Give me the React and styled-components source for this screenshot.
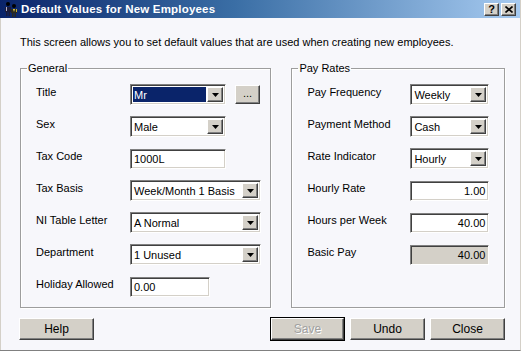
import React from "react";
import styled, { createGlobalStyle, css } from "styled-components";

const GlobalStyle = createGlobalStyle`
  html, body {
    margin: 0;
    padding: 0;
    background: #ffffff;
  }
  * {
    box-sizing: border-box;
  }
`;

const raised = css`
  background: #d4d0c8;
  border: 1px solid;
  border-color: #ffffff #404040 #404040 #ffffff;
  box-shadow: inset -1px -1px #808080;
`;

const sunken = css`
  border: 1px solid;
  border-color: #808080 #ffffff #ffffff #808080;
  box-shadow: inset 1px 1px #404040, inset -1px -1px #d4d0c8;
`;

const Window = styled.div`
  width: 521px;
  height: 351px;
  display: flex;
  flex-direction: column;
  background: #f7f7fb;
  border-right: 1px solid #d4d0c8;
  border-bottom: 1px solid #808080;
  font-family: "Liberation Sans", Arial, sans-serif;
  font-size: 11px;
  color: #000;
`;

const TitleBar = styled.div`
  height: 18px;
  display: flex;
  align-items: center;
  padding: 0 4px 0 3px;
  background: linear-gradient(to right, #0a246a 0%, #3a6ea5 45%, #a6caf0 100%);
  color: #fff;
  font-weight: bold;
  font-size: 11.5px;
`;

const TitleText = styled.span`
  margin-left: 2px;
  flex: 1;
  letter-spacing: 0.2px;
`;

const CaptionButton = styled.button`
  ${raised};
  width: 15px;
  height: 13px;
  padding: 0;
  margin-left: 2px;
  display: flex;
  align-items: center;
  justify-content: center;
  font-family: "Liberation Sans", Arial, sans-serif;
  font-weight: bold;
  font-size: 11px;
  line-height: 1;
  color: #000;
`;

const Body = styled.div`
  flex: 1;
  display: flex;
  flex-direction: column;
  padding: 18px 15px 0 19px;
  border-left: 1px solid #d4d0c8;
`;

const Intro = styled.p`
  margin: 0 0 13px 0;
  line-height: 13px;
  white-space: nowrap;
`;

const Groups = styled.div`
  display: flex;
  gap: 20px;
`;

const GroupBox = styled.fieldset`
  margin: 0;
  width: ${(p) => p.$width}px;
  padding: 9px 0 10px 15px;
  border: 1px solid #9d9d9d;
  box-shadow: 1px 1px 0 #ffffff, inset 1px 1px 0 #ffffff;
  display: grid;
  grid-template-columns: ${(p) => p.$labelWidth}px 1fr;
  grid-auto-rows: 21px;
  row-gap: 11px;
  align-content: start;
`;

const Legend = styled.legend`
  margin-left: -9px;
  padding: 0 1px;
  line-height: 13px;
`;

const Label = styled.span`
  align-self: start;
  padding-top: 2px;
  line-height: 13px;
  white-space: nowrap;
`;

const Cell = styled.div`
  display: flex;
  align-items: center;
  gap: 9px;
`;

const ComboBox = styled.div`
  ${sunken};
  width: ${(p) => p.$width}px;
  height: 21px;
  display: flex;
  align-items: stretch;
  background: #fff;
  padding: 2px;
`;

const ComboValue = styled.span`
  flex: 1;
  display: flex;
  align-items: center;
  padding-left: 1px;
  background: ${(p) => (p.$selected ? "#0a246a" : "transparent")};
  color: ${(p) => (p.$selected ? "#fff" : "#000")};
  white-space: nowrap;
  overflow: hidden;
  margin-right: 1px;
`;

const DropButton = styled.span`
  ${raised};
  width: 16px;
  display: flex;
  align-items: center;
  justify-content: center;
`;

const TextField = styled.div`
  ${sunken};
  width: ${(p) => p.$width}px;
  height: 20px;
  display: flex;
  align-items: center;
  justify-content: ${(p) => (p.$right ? "flex-end" : "flex-start")};
  padding: 0 3px;
  background: ${(p) => (p.$disabled ? "#d4d0c8" : "#fff")};
  white-space: nowrap;
`;

const SmallButton = styled.button`
  ${raised};
  width: 25px;
  height: 19px;
  padding: 0 0 4px 0;
  font-family: "Liberation Sans", Arial, sans-serif;
  font-size: 11px;
  color: #000;
`;

const ButtonRow = styled.div`
  display: flex;
  justify-content: space-between;
  margin-top: 10px;
  margin-left: -1px;
`;

const ButtonGroup = styled.div`
  display: flex;
  gap: 5px;
`;

const PushButton = styled.button`
  ${raised};
  width: ${(p) => (p.$default ? 73 : 75)}px;
  height: 22px;
  padding: 0;
  font-family: "Liberation Sans", Arial, sans-serif;
  font-size: 12px;
  font-weight: normal;
  color: ${(p) => (p.disabled ? "#a0a0a0" : "#000")};
  ${(p) =>
    p.$default &&
    css`
      outline: 1px solid #000;
      outline-offset: 0;
      margin-right: 1px;
      text-shadow: ${p.disabled ? "1px 1px #ffffff" : "none"};
    `}
`;

function Arrow() {
  return (
    <svg width="7" height="4" viewBox="0 0 7 4">
      <path d="M0 0h7L3.5 4z" fill="#000" />
    </svg>
  );
}

function Combo({ width, value, selected }) {
  return (
    <ComboBox $width={width}>
      <ComboValue $selected={selected}>{value}</ComboValue>
      <DropButton>
        <Arrow />
      </DropButton>
    </ComboBox>
  );
}

function AppIcon() {
  return (
    <svg width="16" height="16" viewBox="0 0 16 16">
      <circle cx="5" cy="3" r="2" fill="#000" />
      <path d="M2 6h6v5H7v4H5.5v-4h-1v4H3v-4H2z" fill="#1c1c3a" />
      <path d="M3 6h1v4H3z" fill="#b0b0c8" />
      <circle cx="11" cy="5" r="2" fill="#000" />
      <path d="M8 8h6v4h-1v4h-1.5v-4h-1v4H9v-4H8z" fill="#2a2a20" />
      <path d="M10 8h2l-1 3z" fill="#e8d040" />
      <path d="M13 8h1v3h-1z" fill="#c8b030" />
    </svg>
  );
}

export default function App() {
  return (
    <>
      <GlobalStyle />
      <Window>
        <TitleBar>
          <AppIcon />
          <TitleText>Default Values for New Employees</TitleText>
          <CaptionButton>?</CaptionButton>
          <CaptionButton>
            <svg width="8" height="7" viewBox="0 0 8 7">
              <path d="M0.5 0.5l7 6M7.5 0.5l-7 6" stroke="#000" strokeWidth="1.6" />
            </svg>
          </CaptionButton>
        </TitleBar>
        <Body>
          <Intro>
            This screen allows you to set default values that are used when creating new employees.
          </Intro>
          <Groups>
            <GroupBox $width={253} $labelWidth={94}>
              <Legend>General</Legend>
              <Label>Title</Label>
              <Cell>
                <Combo width={96} value="Mr" selected />
                <SmallButton>...</SmallButton>
              </Cell>
              <Label>Sex</Label>
              <Cell>
                <Combo width={96} value="Male" />
              </Cell>
              <Label>Tax Code</Label>
              <Cell>
                <TextField $width={96}>1000L</TextField>
              </Cell>
              <Label>Tax Basis</Label>
              <Cell>
                <Combo width={131} value="Week/Month 1 Basis" />
              </Cell>
              <Label>NI Table Letter</Label>
              <Cell>
                <Combo width={131} value="A Normal" />
              </Cell>
              <Label>Department</Label>
              <Cell>
                <Combo width={131} value="1 Unused" />
              </Cell>
              <Label>Holiday Allowed</Label>
              <Cell>
                <TextField $width={80}>0.00</TextField>
              </Cell>
            </GroupBox>
            <GroupBox $width={215} $labelWidth={103}>
              <Legend>Pay Rates</Legend>
              <Label>Pay Frequency</Label>
              <Cell>
                <Combo width={79} value="Weekly" />
              </Cell>
              <Label>Payment Method</Label>
              <Cell>
                <Combo width={79} value="Cash" />
              </Cell>
              <Label>Rate Indicator</Label>
              <Cell>
                <Combo width={79} value="Hourly" />
              </Cell>
              <Label>Hourly Rate</Label>
              <Cell>
                <TextField $width={79} $right>1.00</TextField>
              </Cell>
              <Label>Hours per Week</Label>
              <Cell>
                <TextField $width={79} $right>40.00</TextField>
              </Cell>
              <Label>Basic Pay</Label>
              <Cell>
                <TextField $width={79} $right $disabled>40.00</TextField>
              </Cell>
            </GroupBox>
          </Groups>
          <ButtonRow>
            <PushButton>Help</PushButton>
            <ButtonGroup>
              <PushButton $default disabled>Save</PushButton>
              <PushButton>Undo</PushButton>
              <PushButton>Close</PushButton>
            </ButtonGroup>
          </ButtonRow>
        </Body>
      </Window>
    </>
  );
}
